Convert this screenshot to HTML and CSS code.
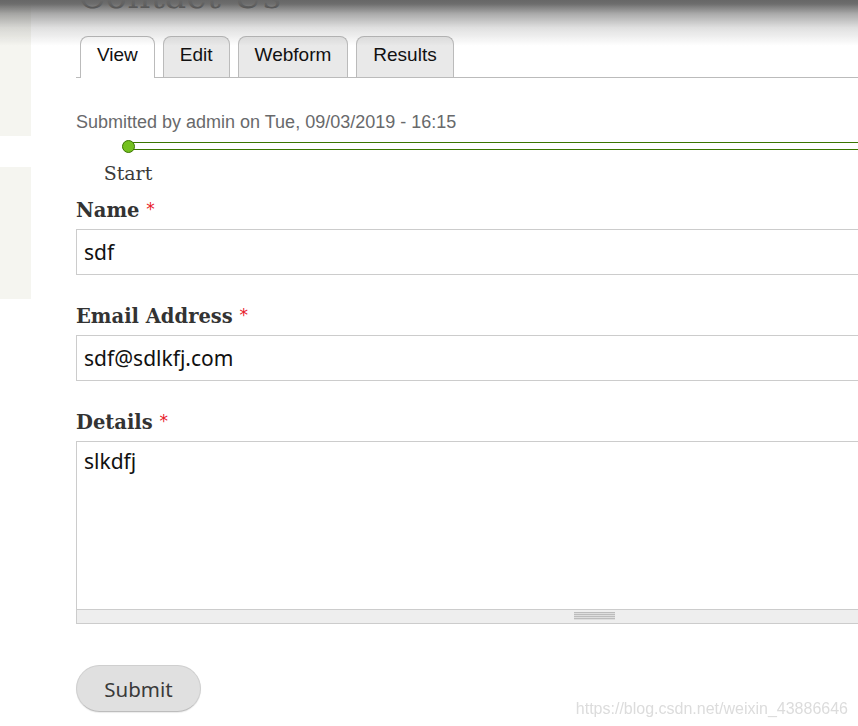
FILE: index.html
```html
<!DOCTYPE html>
<html lang="en">
<head>
<meta charset="utf-8">
<title>Contact Us</title>
<link rel="stylesheet" href="styles.css">
</head>
<body>
<div class="page">
  <aside class="sidebar">
    <div class="side-block side-block-top"></div>
    <div class="side-block side-block-bottom"></div>
  </aside>
  <main class="main">
    <h1 class="title">Contact Us</h1>
    <ul class="tabs">
      <li class="tab tab-active">View</li>
      <li class="tab">Edit</li>
      <li class="tab">Webform</li>
      <li class="tab">Results</li>
    </ul>
    <p class="submitted">Submitted by admin on Tue, 09/03/2019 - 16:15</p>
    <div class="progress">
      <div class="progress-track"><span class="progress-dot"></span></div>
      <div class="progress-label">Start</div>
    </div>
    <form class="webform">
      <div class="form-item">
        <label class="form-label">Name <span class="req">*</span></label>
        <input class="form-text" type="text" value="sdf">
      </div>
      <div class="form-item">
        <label class="form-label">Email Address <span class="req">*</span></label>
        <input class="form-text" type="text" value="sdf@sdlkfj.com">
      </div>
      <div class="form-item form-item-last">
        <label class="form-label">Details <span class="req">*</span></label>
        <div class="textarea-wrap">
          <textarea class="form-textarea">slkdfj</textarea>
          <div class="grippie"><span class="grip"></span></div>
        </div>
      </div>
      <div class="actions">
        <button class="submit" type="button">Submit</button>
      </div>
    </form>
  </main>
</div>
<div class="shade"></div>
<div class="watermark">https://blog.csdn.net/weixin_43886646</div>
</body>
</html>
```

FILE: styles.css
```css
html, body {
  margin: 0;
  padding: 0;
  overflow: hidden;
  background: #fff;
  height: 726px;
}

.page {
  display: flex;
  align-items: flex-start;
  width: 1200px;
}

.sidebar {
  width: 31px;
  flex: none;
  display: flex;
  flex-direction: column;
  gap: 31px;
}

.side-block {
  background: #f5f5f0;
}

.side-block-top { height: 136px; }
.side-block-bottom { height: 132px; }

.main {
  padding-left: 45px;
  width: 1036px;
  flex: none;
}

.title {
  font-family: "DejaVu Serif", serif;
  font-weight: normal;
  font-size: 36px;
  line-height: 44px;
  color: #222;
  margin: -26px 0 0 2px;
  white-space: nowrap;
}

.tabs {
  list-style: none;
  margin: 18px 0 0 0;
  padding: 0 0 0 4px;
  display: flex;
  gap: 8px;
  border-bottom: 1px solid #bbb;
}

.tab {
  font-family: "Liberation Sans", Arial, sans-serif;
  font-size: 19px;
  line-height: 24px;
  padding: 6px 16px 10px;
  color: #111;
  background: #e9e9e9;
  border: 1px solid #bbb;
  border-bottom: 0;
  border-radius: 8px 8px 0 0;
}

.tab-active {
  background: #fff;
  margin-bottom: -1px;
  padding-bottom: 11px;
}

.submitted {
  font-family: "Liberation Sans", Arial, sans-serif;
  font-size: 18px;
  line-height: 27px;
  color: #68696b;
  margin: 31px 0 0 0;
}

.progress {
  margin-top: 6px;
}

.progress-track {
  position: relative;
  margin-left: 52px;
  height: 6px;
  border-top: 1px solid #3a7500;
  border-bottom: 1px solid #3a7500;
}

.progress-dot {
  position: absolute;
  left: -6px;
  top: -3px;
  width: 11px;
  height: 11px;
  border-radius: 50%;
  background: #74c11f;
  border: 1px solid #3a7500;
}

.progress-label {
  width: 104px;
  text-align: center;
  font-family: "DejaVu Serif", serif;
  font-size: 19px;
  line-height: 24px;
  color: #3b3b3b;
  margin-top: 11px;
}

.webform {
  margin-top: 12px;
}

.form-item {
  margin-bottom: 28px;
}

.form-item-last {
  margin-bottom: 0;
}

.form-label {
  display: block;
  font-family: "DejaVu Serif", serif;
  font-weight: bold;
  font-size: 19.5px;
  line-height: 24px;
  color: #333;
  margin-bottom: 6px;
}

.req {
  font-family: "DejaVu Sans", sans-serif;
  font-weight: normal;
  color: #e8202a;
  font-size: 17px;
  vertical-align: 2px;
}

.form-text {
  display: block;
  box-sizing: border-box;
  width: 100%;
  height: 46px;
  margin: 0;
  border: 1px solid #ccc;
  border-radius: 0;
  padding: 0 7px;
  font-family: "Noto Sans", sans-serif;
  font-size: 21px;
  color: #111;
  background: #fff;
  outline: none;
}

.textarea-wrap {
  display: flex;
  flex-direction: column;
}

.form-textarea {
  display: block;
  box-sizing: border-box;
  width: 100%;
  height: 169px;
  margin: 0;
  border: 1px solid #ccc;
  border-radius: 0;
  padding: 5px 7px;
  font-family: "Noto Sans", sans-serif;
  font-size: 21px;
  line-height: 29px;
  color: #111;
  resize: none;
  outline: none;
}

.grippie {
  height: 13px;
  background: #eee;
  border: 1px solid #ccc;
  border-top: 0;
  display: flex;
  justify-content: center;
  align-items: center;
}

.grip {
  width: 41px;
  height: 8px;
  background: repeating-linear-gradient(to bottom, #bcbcbc 0, #bcbcbc 1px, #dedede 1px, #dedede 2px);
  margin-top: -1px;
}

.actions {
  margin-top: 41px;
}

.submit {
  font-family: "Noto Sans", sans-serif;
  font-size: 20.5px;
  line-height: 28px;
  color: #3a3a3a;
  background: #e0e0e0;
  border: 1px solid #cfcfcf;
  border-bottom-color: #bdbdbd;
  border-radius: 24px;
  width: 125px;
  height: 47px;
  padding: 0;
  box-shadow: 0 1px 1px rgba(0,0,0,0.08);
}

.shade {
  position: fixed;
  left: 0;
  top: 0;
  width: 100%;
  height: 48px;
  background: linear-gradient(to bottom, rgba(102,102,102,1) 0, rgba(102,102,102,0.95) 4px, rgba(102,102,102,0.55) 14px, rgba(102,102,102,0.2) 28px, rgba(102,102,102,0) 46px);
  pointer-events: none;
}

.watermark {
  position: fixed;
  right: 10px;
  bottom: 7px;
  font-family: "Liberation Sans", Arial, sans-serif;
  font-size: 16px;
  line-height: 20px;
  color: #dcdcdc;
}
```
